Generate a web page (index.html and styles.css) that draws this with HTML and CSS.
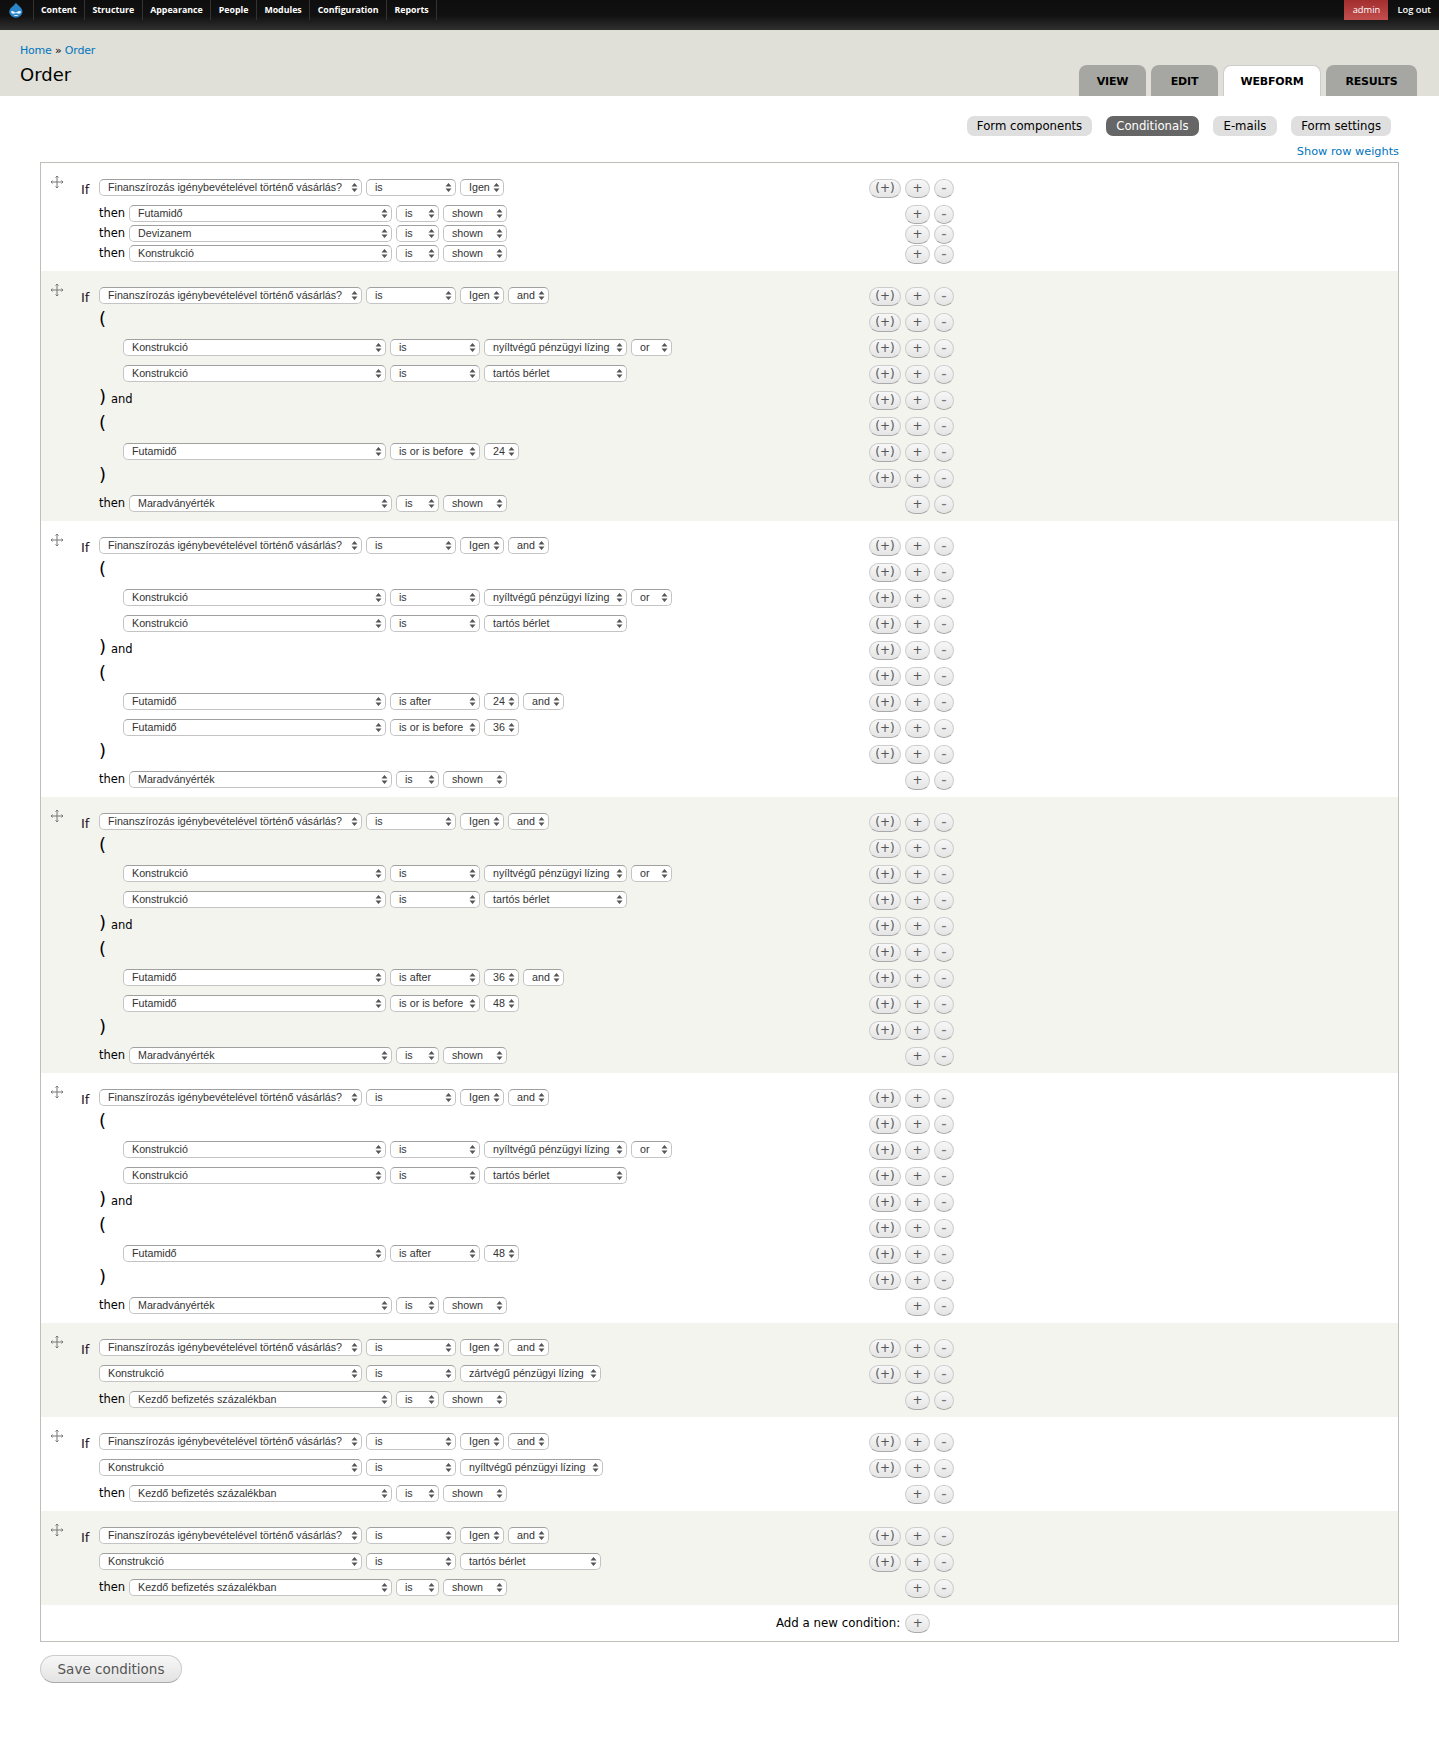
FILE: index.html
```html
<!DOCTYPE html>
<html lang="en">
<head>
  <meta charset="UTF-8" />
  <title>Order</title>
  <link rel="stylesheet" href="styles.css">
</head>
<body>
  <svg class="defs" width="0" height="0">
    <symbol id="move" viewBox="0 0 14 14">
      <path d="M7 1v12M1 7h12M5.5 2.500 7 1l1.500 1.500M5.500 11.500 7 13l1.500-1.500M2.500 5.500 1 7l1.500 1.500M11.500 5.500 13 7l-1.500 1.500" fill="none" stroke="#777" stroke-width="1"/>
    </symbol>
  </svg>

  <div class="toolbar">
    <a class="logo" href="#">
      <svg width="18" height="20" viewBox="0 0 18 20">
        <path d="M9 1.500C9.500 4 15.500 6 15.500 11A6.700 6.500 0 0 1 2.200 11C2.200 6.500 8 4.500 9 1.500Z" fill="#2a86c8"/>
        <path d="M4 10.500C6 9 7 11 8.600 11.500C10 11 12 9 14 10.500C14 12.500 12 13 11 12.500C9.800 12 8.500 12 7.400 12.500C6 13.100 4.200 12.500 4 10.500Z" fill="#eef5fb"/>
        <path d="M6.500 14.500C8 13.700 10 13.700 11.500 14.500C10 15.300 8 15.300 6.500 14.500Z" fill="#eef5fb"/>
      </svg>
    </a>
    <a class="menu-item" href="#">Content</a>
    <a class="menu-item" href="#">Structure</a>
    <a class="menu-item" href="#">Appearance</a>
    <a class="menu-item" href="#">People</a>
    <a class="menu-item" href="#">Modules</a>
    <a class="menu-item" href="#">Configuration</a>
    <a class="menu-item" href="#">Reports</a>
    <a class="user-link" href="#">admin</a>
    <a class="logout-link" href="#">Log out</a>
  </div>

  <div class="page-head">
    <div class="head-left">
      <div class="breadcrumb"><a href="#">Home</a> » <a href="#">Order</a></div>
      <h1>Order</h1>
    </div>
    <ul class="tabs">
      <li class="tab-view"><a href="#">View</a></li>
      <li class="tab-edit"><a href="#">Edit</a></li>
      <li class="tab-webform active"><a href="#">Webform</a></li>
      <li class="tab-results"><a href="#">Results</a></li>
    </ul>
  </div>

  <div class="content">
    <ul class="subtabs">
      <li><a href="#">Form components</a></li>
      <li class="active"><a href="#">Conditionals</a></li>
      <li class="mails"><a href="#">E-mails</a></li>
      <li><a href="#">Form settings</a></li>
    </ul>
    <div class="weights"><a href="#">Show row weights</a></div>

    <div class="rules">

      <div class="rule">
        <svg class="handle" width="14" height="14"><use href="#move"/></svg>
        <div class="row">
          <div class="lead">If</div>
          <div class="cond">
            <select class="w262"><option>Finanszírozás igénybevételével történő vásárlás?</option></select>
            <select class="w89"><option>is</option></select>
            <select class="w44"><option>Igen</option></select>
          </div>
          <div class="actions"><button class="btn grp">(+)</button><button class="btn add">+</button><button class="btn del">-</button></div>
        </div>
        <div class="row tight">
          <div class="lead"></div>
          <div class="cond then"><span class="then-label">then</span>
            <select class="w262"><option>Futamidő</option></select>
            <select class="w44"><option>is</option></select>
            <select class="w64"><option>shown</option></select>
          </div>
          <div class="actions nogrp"><button class="btn add">+</button><button class="btn del">-</button></div>
        </div>
        <div class="row tight">
          <div class="lead"></div>
          <div class="cond then"><span class="then-label">then</span>
            <select class="w262"><option>Devizanem</option></select>
            <select class="w44"><option>is</option></select>
            <select class="w64"><option>shown</option></select>
          </div>
          <div class="actions nogrp"><button class="btn add">+</button><button class="btn del">-</button></div>
        </div>
        <div class="row">
          <div class="lead"></div>
          <div class="cond then"><span class="then-label">then</span>
            <select class="w262"><option>Konstrukció</option></select>
            <select class="w44"><option>is</option></select>
            <select class="w64"><option>shown</option></select>
          </div>
          <div class="actions nogrp"><button class="btn add">+</button><button class="btn del">-</button></div>
        </div>
      </div>

      <div class="rule alt">
        <svg class="handle" width="14" height="14"><use href="#move"/></svg>
        <div class="row">
          <div class="lead">If</div>
          <div class="cond">
            <select class="w262"><option>Finanszírozás igénybevételével történő vásárlás?</option></select>
            <select class="w89"><option>is</option></select>
            <select class="w44"><option>Igen</option></select>
            <select class="w41"><option>and</option></select>
          </div>
          <div class="actions"><button class="btn grp">(+)</button><button class="btn add">+</button><button class="btn del">-</button></div>
        </div>
        <div class="row">
          <div class="lead"></div>
          <div class="cond paren"><span>(</span></div>
          <div class="actions"><button class="btn grp">(+)</button><button class="btn add">+</button><button class="btn del">-</button></div>
        </div>
        <div class="row">
          <div class="lead"></div>
          <div class="cond indent">
            <select class="w262"><option>Konstrukció</option></select>
            <select class="w89"><option>is</option></select>
            <select class="w143"><option>nyíltvégű pénzügyi lízing</option></select>
            <select class="w41"><option>or</option></select>
          </div>
          <div class="actions"><button class="btn grp">(+)</button><button class="btn add">+</button><button class="btn del">-</button></div>
        </div>
        <div class="row">
          <div class="lead"></div>
          <div class="cond indent">
            <select class="w262"><option>Konstrukció</option></select>
            <select class="w89"><option>is</option></select>
            <select class="w143"><option>tartós bérlet</option></select>
          </div>
          <div class="actions"><button class="btn grp">(+)</button><button class="btn add">+</button><button class="btn del">-</button></div>
        </div>
        <div class="row">
          <div class="lead"></div>
          <div class="cond paren"><span>)</span> <em>and</em></div>
          <div class="actions"><button class="btn grp">(+)</button><button class="btn add">+</button><button class="btn del">-</button></div>
        </div>
        <div class="row">
          <div class="lead"></div>
          <div class="cond paren"><span>(</span></div>
          <div class="actions"><button class="btn grp">(+)</button><button class="btn add">+</button><button class="btn del">-</button></div>
        </div>
        <div class="row">
          <div class="lead"></div>
          <div class="cond indent">
            <select class="w262"><option>Futamidő</option></select>
            <select class="w89"><option>is or is before</option></select>
            <select class="w35"><option>24</option></select>
          </div>
          <div class="actions"><button class="btn grp">(+)</button><button class="btn add">+</button><button class="btn del">-</button></div>
        </div>
        <div class="row">
          <div class="lead"></div>
          <div class="cond paren"><span>)</span></div>
          <div class="actions"><button class="btn grp">(+)</button><button class="btn add">+</button><button class="btn del">-</button></div>
        </div>
        <div class="row">
          <div class="lead"></div>
          <div class="cond then"><span class="then-label">then</span>
            <select class="w262"><option>Maradványérték</option></select>
            <select class="w44"><option>is</option></select>
            <select class="w64"><option>shown</option></select>
          </div>
          <div class="actions nogrp"><button class="btn add">+</button><button class="btn del">-</button></div>
        </div>
      </div>

      <div class="rule">
        <svg class="handle" width="14" height="14"><use href="#move"/></svg>
        <div class="row">
          <div class="lead">If</div>
          <div class="cond">
            <select class="w262"><option>Finanszírozás igénybevételével történő vásárlás?</option></select>
            <select class="w89"><option>is</option></select>
            <select class="w44"><option>Igen</option></select>
            <select class="w41"><option>and</option></select>
          </div>
          <div class="actions"><button class="btn grp">(+)</button><button class="btn add">+</button><button class="btn del">-</button></div>
        </div>
        <div class="row">
          <div class="lead"></div>
          <div class="cond paren"><span>(</span></div>
          <div class="actions"><button class="btn grp">(+)</button><button class="btn add">+</button><button class="btn del">-</button></div>
        </div>
        <div class="row">
          <div class="lead"></div>
          <div class="cond indent">
            <select class="w262"><option>Konstrukció</option></select>
            <select class="w89"><option>is</option></select>
            <select class="w143"><option>nyíltvégű pénzügyi lízing</option></select>
            <select class="w41"><option>or</option></select>
          </div>
          <div class="actions"><button class="btn grp">(+)</button><button class="btn add">+</button><button class="btn del">-</button></div>
        </div>
        <div class="row">
          <div class="lead"></div>
          <div class="cond indent">
            <select class="w262"><option>Konstrukció</option></select>
            <select class="w89"><option>is</option></select>
            <select class="w143"><option>tartós bérlet</option></select>
          </div>
          <div class="actions"><button class="btn grp">(+)</button><button class="btn add">+</button><button class="btn del">-</button></div>
        </div>
        <div class="row">
          <div class="lead"></div>
          <div class="cond paren"><span>)</span> <em>and</em></div>
          <div class="actions"><button class="btn grp">(+)</button><button class="btn add">+</button><button class="btn del">-</button></div>
        </div>
        <div class="row">
          <div class="lead"></div>
          <div class="cond paren"><span>(</span></div>
          <div class="actions"><button class="btn grp">(+)</button><button class="btn add">+</button><button class="btn del">-</button></div>
        </div>
        <div class="row">
          <div class="lead"></div>
          <div class="cond indent">
            <select class="w262"><option>Futamidő</option></select>
            <select class="w89"><option>is after</option></select>
            <select class="w35"><option>24</option></select>
            <select class="w41"><option>and</option></select>
          </div>
          <div class="actions"><button class="btn grp">(+)</button><button class="btn add">+</button><button class="btn del">-</button></div>
        </div>
        <div class="row">
          <div class="lead"></div>
          <div class="cond indent">
            <select class="w262"><option>Futamidő</option></select>
            <select class="w89"><option>is or is before</option></select>
            <select class="w35"><option>36</option></select>
          </div>
          <div class="actions"><button class="btn grp">(+)</button><button class="btn add">+</button><button class="btn del">-</button></div>
        </div>
        <div class="row">
          <div class="lead"></div>
          <div class="cond paren"><span>)</span></div>
          <div class="actions"><button class="btn grp">(+)</button><button class="btn add">+</button><button class="btn del">-</button></div>
        </div>
        <div class="row">
          <div class="lead"></div>
          <div class="cond then"><span class="then-label">then</span>
            <select class="w262"><option>Maradványérték</option></select>
            <select class="w44"><option>is</option></select>
            <select class="w64"><option>shown</option></select>
          </div>
          <div class="actions nogrp"><button class="btn add">+</button><button class="btn del">-</button></div>
        </div>
      </div>

      <div class="rule alt">
        <svg class="handle" width="14" height="14"><use href="#move"/></svg>
        <div class="row">
          <div class="lead">If</div>
          <div class="cond">
            <select class="w262"><option>Finanszírozás igénybevételével történő vásárlás?</option></select>
            <select class="w89"><option>is</option></select>
            <select class="w44"><option>Igen</option></select>
            <select class="w41"><option>and</option></select>
          </div>
          <div class="actions"><button class="btn grp">(+)</button><button class="btn add">+</button><button class="btn del">-</button></div>
        </div>
        <div class="row">
          <div class="lead"></div>
          <div class="cond paren"><span>(</span></div>
          <div class="actions"><button class="btn grp">(+)</button><button class="btn add">+</button><button class="btn del">-</button></div>
        </div>
        <div class="row">
          <div class="lead"></div>
          <div class="cond indent">
            <select class="w262"><option>Konstrukció</option></select>
            <select class="w89"><option>is</option></select>
            <select class="w143"><option>nyíltvégű pénzügyi lízing</option></select>
            <select class="w41"><option>or</option></select>
          </div>
          <div class="actions"><button class="btn grp">(+)</button><button class="btn add">+</button><button class="btn del">-</button></div>
        </div>
        <div class="row">
          <div class="lead"></div>
          <div class="cond indent">
            <select class="w262"><option>Konstrukció</option></select>
            <select class="w89"><option>is</option></select>
            <select class="w143"><option>tartós bérlet</option></select>
          </div>
          <div class="actions"><button class="btn grp">(+)</button><button class="btn add">+</button><button class="btn del">-</button></div>
        </div>
        <div class="row">
          <div class="lead"></div>
          <div class="cond paren"><span>)</span> <em>and</em></div>
          <div class="actions"><button class="btn grp">(+)</button><button class="btn add">+</button><button class="btn del">-</button></div>
        </div>
        <div class="row">
          <div class="lead"></div>
          <div class="cond paren"><span>(</span></div>
          <div class="actions"><button class="btn grp">(+)</button><button class="btn add">+</button><button class="btn del">-</button></div>
        </div>
        <div class="row">
          <div class="lead"></div>
          <div class="cond indent">
            <select class="w262"><option>Futamidő</option></select>
            <select class="w89"><option>is after</option></select>
            <select class="w35"><option>36</option></select>
            <select class="w41"><option>and</option></select>
          </div>
          <div class="actions"><button class="btn grp">(+)</button><button class="btn add">+</button><button class="btn del">-</button></div>
        </div>
        <div class="row">
          <div class="lead"></div>
          <div class="cond indent">
            <select class="w262"><option>Futamidő</option></select>
            <select class="w89"><option>is or is before</option></select>
            <select class="w35"><option>48</option></select>
          </div>
          <div class="actions"><button class="btn grp">(+)</button><button class="btn add">+</button><button class="btn del">-</button></div>
        </div>
        <div class="row">
          <div class="lead"></div>
          <div class="cond paren"><span>)</span></div>
          <div class="actions"><button class="btn grp">(+)</button><button class="btn add">+</button><button class="btn del">-</button></div>
        </div>
        <div class="row">
          <div class="lead"></div>
          <div class="cond then"><span class="then-label">then</span>
            <select class="w262"><option>Maradványérték</option></select>
            <select class="w44"><option>is</option></select>
            <select class="w64"><option>shown</option></select>
          </div>
          <div class="actions nogrp"><button class="btn add">+</button><button class="btn del">-</button></div>
        </div>
      </div>

      <div class="rule">
        <svg class="handle" width="14" height="14"><use href="#move"/></svg>
        <div class="row">
          <div class="lead">If</div>
          <div class="cond">
            <select class="w262"><option>Finanszírozás igénybevételével történő vásárlás?</option></select>
            <select class="w89"><option>is</option></select>
            <select class="w44"><option>Igen</option></select>
            <select class="w41"><option>and</option></select>
          </div>
          <div class="actions"><button class="btn grp">(+)</button><button class="btn add">+</button><button class="btn del">-</button></div>
        </div>
        <div class="row">
          <div class="lead"></div>
          <div class="cond paren"><span>(</span></div>
          <div class="actions"><button class="btn grp">(+)</button><button class="btn add">+</button><button class="btn del">-</button></div>
        </div>
        <div class="row">
          <div class="lead"></div>
          <div class="cond indent">
            <select class="w262"><option>Konstrukció</option></select>
            <select class="w89"><option>is</option></select>
            <select class="w143"><option>nyíltvégű pénzügyi lízing</option></select>
            <select class="w41"><option>or</option></select>
          </div>
          <div class="actions"><button class="btn grp">(+)</button><button class="btn add">+</button><button class="btn del">-</button></div>
        </div>
        <div class="row">
          <div class="lead"></div>
          <div class="cond indent">
            <select class="w262"><option>Konstrukció</option></select>
            <select class="w89"><option>is</option></select>
            <select class="w143"><option>tartós bérlet</option></select>
          </div>
          <div class="actions"><button class="btn grp">(+)</button><button class="btn add">+</button><button class="btn del">-</button></div>
        </div>
        <div class="row">
          <div class="lead"></div>
          <div class="cond paren"><span>)</span> <em>and</em></div>
          <div class="actions"><button class="btn grp">(+)</button><button class="btn add">+</button><button class="btn del">-</button></div>
        </div>
        <div class="row">
          <div class="lead"></div>
          <div class="cond paren"><span>(</span></div>
          <div class="actions"><button class="btn grp">(+)</button><button class="btn add">+</button><button class="btn del">-</button></div>
        </div>
        <div class="row">
          <div class="lead"></div>
          <div class="cond indent">
            <select class="w262"><option>Futamidő</option></select>
            <select class="w89"><option>is after</option></select>
            <select class="w35"><option>48</option></select>
          </div>
          <div class="actions"><button class="btn grp">(+)</button><button class="btn add">+</button><button class="btn del">-</button></div>
        </div>
        <div class="row">
          <div class="lead"></div>
          <div class="cond paren"><span>)</span></div>
          <div class="actions"><button class="btn grp">(+)</button><button class="btn add">+</button><button class="btn del">-</button></div>
        </div>
        <div class="row">
          <div class="lead"></div>
          <div class="cond then"><span class="then-label">then</span>
            <select class="w262"><option>Maradványérték</option></select>
            <select class="w44"><option>is</option></select>
            <select class="w64"><option>shown</option></select>
          </div>
          <div class="actions nogrp"><button class="btn add">+</button><button class="btn del">-</button></div>
        </div>
      </div>

      <div class="rule alt">
        <svg class="handle" width="14" height="14"><use href="#move"/></svg>
        <div class="row">
          <div class="lead">If</div>
          <div class="cond">
            <select class="w262"><option>Finanszírozás igénybevételével történő vásárlás?</option></select>
            <select class="w89"><option>is</option></select>
            <select class="w44"><option>Igen</option></select>
            <select class="w41"><option>and</option></select>
          </div>
          <div class="actions"><button class="btn grp">(+)</button><button class="btn add">+</button><button class="btn del">-</button></div>
        </div>
        <div class="row">
          <div class="lead"></div>
          <div class="cond">
            <select class="w262"><option>Konstrukció</option></select>
            <select class="w89"><option>is</option></select>
            <select class="w141"><option>zártvégű pénzügyi lízing</option></select>
          </div>
          <div class="actions"><button class="btn grp">(+)</button><button class="btn add">+</button><button class="btn del">-</button></div>
        </div>
        <div class="row">
          <div class="lead"></div>
          <div class="cond then"><span class="then-label">then</span>
            <select class="w262"><option>Kezdő befizetés százalékban</option></select>
            <select class="w44"><option>is</option></select>
            <select class="w64"><option>shown</option></select>
          </div>
          <div class="actions nogrp"><button class="btn add">+</button><button class="btn del">-</button></div>
        </div>
      </div>

      <div class="rule">
        <svg class="handle" width="14" height="14"><use href="#move"/></svg>
        <div class="row">
          <div class="lead">If</div>
          <div class="cond">
            <select class="w262"><option>Finanszírozás igénybevételével történő vásárlás?</option></select>
            <select class="w89"><option>is</option></select>
            <select class="w44"><option>Igen</option></select>
            <select class="w41"><option>and</option></select>
          </div>
          <div class="actions"><button class="btn grp">(+)</button><button class="btn add">+</button><button class="btn del">-</button></div>
        </div>
        <div class="row">
          <div class="lead"></div>
          <div class="cond">
            <select class="w262"><option>Konstrukció</option></select>
            <select class="w89"><option>is</option></select>
            <select class="w143"><option>nyíltvégű pénzügyi lízing</option></select>
          </div>
          <div class="actions"><button class="btn grp">(+)</button><button class="btn add">+</button><button class="btn del">-</button></div>
        </div>
        <div class="row">
          <div class="lead"></div>
          <div class="cond then"><span class="then-label">then</span>
            <select class="w262"><option>Kezdő befizetés százalékban</option></select>
            <select class="w44"><option>is</option></select>
            <select class="w64"><option>shown</option></select>
          </div>
          <div class="actions nogrp"><button class="btn add">+</button><button class="btn del">-</button></div>
        </div>
      </div>

      <div class="rule alt">
        <svg class="handle" width="14" height="14"><use href="#move"/></svg>
        <div class="row">
          <div class="lead">If</div>
          <div class="cond">
            <select class="w262"><option>Finanszírozás igénybevételével történő vásárlás?</option></select>
            <select class="w89"><option>is</option></select>
            <select class="w44"><option>Igen</option></select>
            <select class="w41"><option>and</option></select>
          </div>
          <div class="actions"><button class="btn grp">(+)</button><button class="btn add">+</button><button class="btn del">-</button></div>
        </div>
        <div class="row">
          <div class="lead"></div>
          <div class="cond">
            <select class="w262"><option>Konstrukció</option></select>
            <select class="w89"><option>is</option></select>
            <select class="w141"><option>tartós bérlet</option></select>
          </div>
          <div class="actions"><button class="btn grp">(+)</button><button class="btn add">+</button><button class="btn del">-</button></div>
        </div>
        <div class="row">
          <div class="lead"></div>
          <div class="cond then"><span class="then-label">then</span>
            <select class="w262"><option>Kezdő befizetés százalékban</option></select>
            <select class="w44"><option>is</option></select>
            <select class="w64"><option>shown</option></select>
          </div>
          <div class="actions nogrp"><button class="btn add">+</button><button class="btn del">-</button></div>
        </div>
      </div>

      <div class="add-row">
        <span>Add a new condition:</span>
        <button class="btn add">+</button>
      </div>
    </div>

    <button class="save">Save conditions</button>
  </div>
</body>
</html>
```

FILE: styles.css
```css
body {
  font-family: 'DejaVu Sans', sans-serif;
  font-size: 12px;
  color: #000;
  background-color: #fff;
  margin: 0;
  padding: 0;
}
a {
  color: #0074bd;
  text-decoration: none;
}
.defs {
  display: block;
  height: 0;
}

/* admin toolbar */
.toolbar {
  display: flex;
  height: 30px;
  background: linear-gradient(#0e0e0e 0, #111 52%, #303030 100%);
  font-family: 'Open Sans', sans-serif;
  font-size: 8.8px;
  font-weight: 700;
}
.toolbar a {
  color: #fff;
  height: 20px;
  line-height: 20px;
}
.logo {
  width: 33.5px;
  padding: 1px 0 0 7px;
  box-sizing: border-box;
  border-right: 1px solid #333;
}
.logo svg {
  display: block;
}
.menu-item {
  padding: 0 7.5px;
  border-right: 1px solid #333;
}
.user-link {
  margin-left: auto;
  width: 44px;
  text-align: center;
  background: linear-gradient(#a22e2e, #c24e4e);
  font-size: 9.3px;
  font-weight: 400;
}
.toolbar .logout-link {
  margin-left: 9px;
  margin-right: 8px;
  font-size: 9.3px;
  font-weight: 600;
}

/* page header */
.page-head {
  display: flex;
  justify-content: space-between;
  height: 66px;
  background-color: #e0e0d8;
}
.head-left {
  padding: 14px 0 0 20px;
}
.breadcrumb {
  font-size: 11px;
  letter-spacing: -0.2px;
  line-height: 14px;
}
h1 {
  margin: 5px 0 0;
  font-size: 18px;
  font-weight: 400;
  line-height: 24px;
}
.tabs {
  display: flex;
  gap: 5px;
  list-style: none;
  margin: 35px 22px 0 0;
  padding: 0;
}
.tabs li {
  box-sizing: border-box;
  background-color: #a6a7a2;
  border-radius: 8px 8px 0 0;
  text-align: center;
  line-height: 33px;
  font-weight: 700;
  font-size: 11px;
  letter-spacing: -0.2px;
  text-transform: uppercase;
}
.tabs a {
  color: #000;
}
.tabs .active {
  background-color: #fff;
  border: 1px solid #ccc;
  border-bottom: none;
  line-height: 32px;
}
.tab-view { width: 67px; }
.tab-edit { width: 67px; }
.tab-webform { width: 98px; }
.tab-results { width: 91px; }

.content {
  padding: 20px 40px 0;
}
.subtabs {
  display: flex;
  justify-content: flex-end;
  gap: 14px;
  list-style: none;
  margin: 0 8px 0 0;
  padding: 0;
  font-size: 11.7px;
}
.subtabs a {
  display: block;
  height: 20px;
  line-height: 20px;
  padding: 0 10px;
  border-radius: 7px;
  background-color: #dfdfdf;
  color: #000;
}
.subtabs .mails a {
  padding: 0 11px;
}
.subtabs .active a {
  background-color: #666;
  color: #fff;
}
.weights {
  text-align: right;
  font-size: 11.3px;
  line-height: 16px;
  margin-top: 8px;
  height: 18px;
}

/* conditional rules */
.rules {
  border: 1px solid #bebfb9;
  width: 1357px;
}
.rule {
  position: relative;
  padding: 12px 0 4px;
}
.rule.alt {
  background-color: #f3f4ee;
}
.handle {
  position: absolute;
  left: 9px;
  top: 12px;
}
.row {
  display: flex;
  height: 26px;
  box-sizing: border-box;
  padding-top: 4px;
}
.row.tight {
  height: 20px;
}
.lead {
  width: 58px;
  box-sizing: border-box;
  padding: 3px 0 0 40px;
  font-size: 13px;
  line-height: 15px;
  color: #1d1020;
}
.cond {
  display: flex;
  gap: 4px;
  width: 770px;
  font-size: 11.5px;
}
.cond.indent {
  padding-left: 24px;
  box-sizing: border-box;
}
.then-label {
  width: 26px;
  line-height: 17px;
}
.paren {
  align-items: baseline;
  height: 18px;
  margin-top: -3px;
  line-height: 18px;
  gap: 0;
}
.paren span {
  font-size: 18px;
  margin-right: 5px;
}
.paren em {
  font-style: normal;
}
.cond select {
  appearance: none;
  height: 17px;
  box-sizing: border-box;
  padding: 0 10px 0 8px;
  border: 1px solid #c4c4c4;
  border-top-color: #a0a0a0;
  border-radius: 5px;
  background: #fff url("data:image/svg+xml,%3Csvg xmlns='http://www.w3.org/2000/svg' width='7' height='11'%3E%3Cpath d='M3.500 1 6.500 4.500H.5zM3.500 10 .5 6.500h6z' fill='%23555'/%3E%3C/svg%3E") no-repeat right 3px center;
  font-family: 'Liberation Sans', sans-serif;
  font-size: 10.7px;
  line-height: 15px;
  color: #333;
}
.w262 { width: 263px; }
.w89 { width: 90px; }
.w44 { width: 44px; }
.w41 { width: 41px; }
.w143 { width: 143px; }
.w141 { width: 141px; }
.w35 { width: 35px; }
.w64 { width: 63.5px; }
.then .w44 { width: 43px; }

.actions {
  display: flex;
  gap: 4px;
}
.actions.nogrp {
  padding-left: 36px;
}
.btn {
  height: 19px;
  padding: 0;
  border: 1px solid #ccc;
  border-bottom-color: #aaa;
  border-radius: 10px;
  background: linear-gradient(#f7f7f7, #e5e5e5);
  font-family: 'DejaVu Sans', sans-serif;
  font-size: 12px;
  line-height: 15px;
  color: #555;
}
.btn.grp { width: 32px; }
.btn.add { width: 25px; }
.btn.del {
  width: 20px;
  font-size: 15px;
  color: #777;
}

.add-row {
  display: flex;
  align-items: center;
  height: 36px;
  padding-left: 735px;
  gap: 5px;
  font-size: 11.8px;
}
.save {
  display: block;
  width: 142px;
  height: 28px;
  margin-top: 13px;
  padding: 0;
  border: 1px solid #ccc;
  border-bottom-color: #aaa;
  border-radius: 14px;
  background: linear-gradient(#f7f7f7, #e3e3e3);
  font-family: 'DejaVu Sans', sans-serif;
  font-size: 13.5px;
  color: #555;
}
```
